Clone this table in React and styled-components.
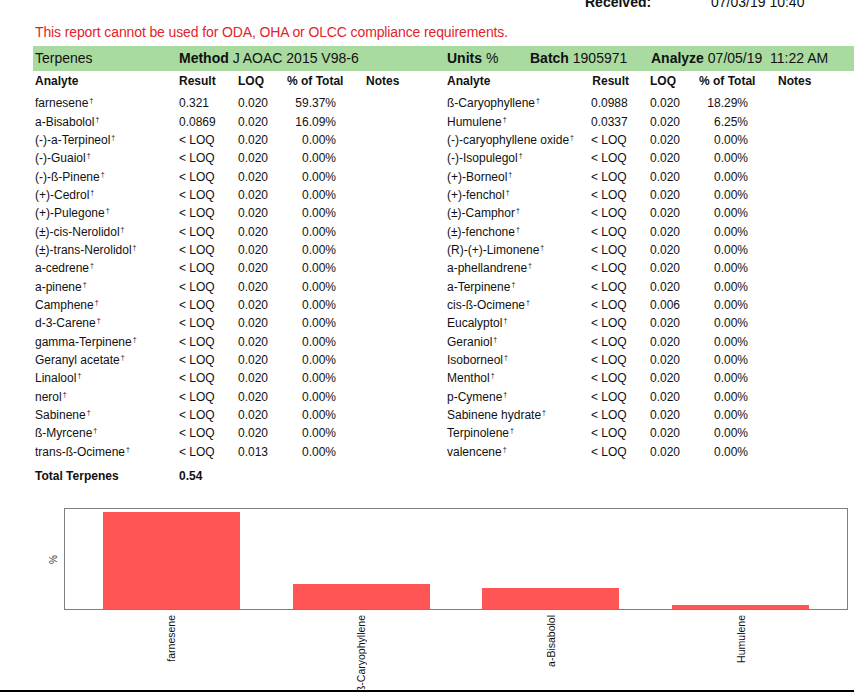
import React from 'react';
import styled, { createGlobalStyle } from 'styled-components';

const GlobalStyle = createGlobalStyle`
  html, body { margin: 0; padding: 0; overflow: hidden; background: #fff; }
  body { font-family: "Liberation Sans", Arial, Helvetica, sans-serif; color: #111; }
`;

const Page = styled.div`
  width: 854px;
  height: 692px;
  box-sizing: border-box;
  padding-left: 33px;
  overflow: hidden;
  display: flex;
  flex-direction: column;
`;

const ReceivedRow = styled.div`
  margin-top: -6px;
  height: 16px;
  line-height: 16px;
  font-size: 14px;
  display: flex;
  padding-left: 552px;
`;

const ReceivedLabel = styled.span`
  font-weight: bold;
  width: 126px;
`;

const Notice = styled.div`
  margin-top: 14px;
  padding-left: 2px;
  height: 16px;
  line-height: 16px;
  font-size: 14px;
  letter-spacing: -0.12px;
  color: #e3232b;
`;

const Band = styled.div`
  margin-top: 6px;
  height: 27px;
  background: #a9dba1;
  display: grid;
  grid-template-columns: 144px 268px 83px 121px 1fr;
  align-items: center;
  padding-left: 2px;
  font-size: 14px;
  white-space: pre;
`;

const Tables = styled.div`
  display: flex;
  padding-left: 2px;
  margin-top: ${(p) => p.$mt || 0}px;
`;

const Half = styled.div`
  flex: ${(p) => (p.$first ? '0 0 412px' : '1 1 auto')};
  display: flex;
  flex-direction: column;
`;

const Row = styled.div`
  display: grid;
  grid-template-columns: 144px 59px 49px 79px 1fr;
  height: 18.33px;
  align-items: center;
  font-size: 12px;
  font-weight: ${(p) => (p.$bold ? 'bold' : 'normal')};
  white-space: nowrap;
`;

const Body = styled.div`
  margin-top: 4px;
  display: flex;
  flex-direction: column;
`;

const Cell = styled.span`
  text-align: ${(p) => p.$align || 'left'};
  padding-right: ${(p) => p.$pr || 0}px;
`;

const Dagger = styled.sup`
  font-size: 7px;
  line-height: 0;
  vertical-align: 4px;
  margin-left: 1px;
`;

const TotalRow = styled(Row)`
  margin-top: 6px;
`;

const ChartRow = styled.div`
  margin-top: 23px;
  display: flex;
`;

const YAxis = styled.div`
  width: 31px;
  height: 102px;
  display: flex;
  align-items: center;
  justify-content: flex-end;
  padding-right: 5px;
  box-sizing: border-box;
`;

const YLabel = styled.span`
  writing-mode: vertical-rl;
  transform: rotate(180deg);
  font-size: 10px;
  color: #333;
`;

const PlotColumn = styled.div`
  width: 784px;
  display: flex;
  flex-direction: column;
`;

const PlotBox = styled.div`
  height: 102px;
  box-sizing: border-box;
  border: 1px solid #7f7f7f;
  display: flex;
  align-items: flex-end;
  justify-content: space-between;
  padding: 0 38px;
`;

const Bar = styled.div`
  width: 137px;
  background: #ff5555;
`;

const Labels = styled.div`
  height: 80px;
  box-sizing: border-box;
  padding: 5px 38px 0;
  display: flex;
  justify-content: space-between;
`;

const LabelCell = styled.div`
  width: 137px;
  display: flex;
  justify-content: center;
  align-items: flex-start;
`;

const LabelText = styled.span`
  writing-mode: vertical-rl;
  transform: rotate(180deg);
  font-size: 10.5px;
  line-height: 12px;
  color: #111;
  white-space: nowrap;
`;

const BottomRule = styled.div`
  position: relative;
  z-index: 1;
  margin-left: -33px;
  width: 854px;
  height: 2px;
  background: #000;
`;

const L = '< LOQ';
const left = [
  ['farnesene', '0.321', '0.020', '59.37%'],
  ['a-Bisabolol', '0.0869', '0.020', '16.09%'],
  ['(-)-a-Terpineol', L, '0.020', '0.00%'],
  ['(-)-Guaiol', L, '0.020', '0.00%'],
  ['(-)-ß-Pinene', L, '0.020', '0.00%'],
  ['(+)-Cedrol', L, '0.020', '0.00%'],
  ['(+)-Pulegone', L, '0.020', '0.00%'],
  ['(±)-cis-Nerolidol', L, '0.020', '0.00%'],
  ['(±)-trans-Nerolidol', L, '0.020', '0.00%'],
  ['a-cedrene', L, '0.020', '0.00%'],
  ['a-pinene', L, '0.020', '0.00%'],
  ['Camphene', L, '0.020', '0.00%'],
  ['d-3-Carene', L, '0.020', '0.00%'],
  ['gamma-Terpinene', L, '0.020', '0.00%'],
  ['Geranyl acetate', L, '0.020', '0.00%'],
  ['Linalool', L, '0.020', '0.00%'],
  ['nerol', L, '0.020', '0.00%'],
  ['Sabinene', L, '0.020', '0.00%'],
  ['ß-Myrcene', L, '0.020', '0.00%'],
  ['trans-ß-Ocimene', L, '0.013', '0.00%'],
];
const right = [
  ['ß-Caryophyllene', '0.0988', '0.020', '18.29%'],
  ['Humulene', '0.0337', '0.020', '6.25%'],
  ['(-)-caryophyllene oxide', L, '0.020', '0.00%'],
  ['(-)-Isopulegol', L, '0.020', '0.00%'],
  ['(+)-Borneol', L, '0.020', '0.00%'],
  ['(+)-fenchol', L, '0.020', '0.00%'],
  ['(±)-Camphor', L, '0.020', '0.00%'],
  ['(±)-fenchone', L, '0.020', '0.00%'],
  ['(R)-(+)-Limonene', L, '0.020', '0.00%'],
  ['a-phellandrene', L, '0.020', '0.00%'],
  ['a-Terpinene', L, '0.020', '0.00%'],
  ['cis-ß-Ocimene', L, '0.006', '0.00%'],
  ['Eucalyptol', L, '0.020', '0.00%'],
  ['Geraniol', L, '0.020', '0.00%'],
  ['Isoborneol', L, '0.020', '0.00%'],
  ['Menthol', L, '0.020', '0.00%'],
  ['p-Cymene', L, '0.020', '0.00%'],
  ['Sabinene hydrate', L, '0.020', '0.00%'],
  ['Terpinolene', L, '0.020', '0.00%'],
  ['valencene', L, '0.020', '0.00%'],
];

const chart = [
  { name: 'farnesene', pct: 59.37 },
  { name: 'ß-Caryophyllene', pct: 18.29 },
  { name: 'a-Bisabolol', pct: 16.09 },
  { name: 'Humulene', pct: 6.25 },
];

function TableHalf({ rows, first }) {
  return (
    <Half $first={first}>
      <Row $bold>
        <Cell>Analyte</Cell>
        <Cell $align={first ? 'left' : 'right'} $pr={first ? 0 : 21}>Result</Cell>
        <Cell>LOQ</Cell>
        <Cell>% of Total</Cell>
        <Cell>Notes</Cell>
      </Row>
      <Body>
        {rows.map(([n, r, q, p]) => (
          <Row key={n}>
            <Cell>
              {n}
              <Dagger>†</Dagger>
            </Cell>
            <Cell>{r}</Cell>
            <Cell>{q}</Cell>
            <Cell $align="right" $pr={30}>{p}</Cell>
            <Cell />
          </Row>
        ))}
      </Body>
    </Half>
  );
}

export default function App() {
  return (
    <>
      <GlobalStyle />
      <Page>
        <ReceivedRow>
          <ReceivedLabel>Received:</ReceivedLabel>
          <span>07/03/19 10:40</span>
        </ReceivedRow>
        <Notice>This report cannot be used for ODA, OHA or OLCC compliance requirements.</Notice>
        <Band>
          <span>Terpenes</span>
          <span><b>Method</b> J AOAC 2015 V98-6</span>
          <span><b>Units</b> %</span>
          <span><b>Batch</b> 1905971</span>
          <span><b>Analyze</b> 07/05/19  11:22 AM</span>
        </Band>
        <Tables $mt={1}>
          <TableHalf rows={left} first />
          <TableHalf rows={right} />
        </Tables>
        <Tables>
          <Half $first>
            <TotalRow $bold>
              <Cell>Total Terpenes</Cell>
              <Cell>0.54</Cell>
              <Cell />
              <Cell />
              <Cell />
            </TotalRow>
          </Half>
        </Tables>
        <ChartRow>
          <YAxis>
            <YLabel>%</YLabel>
          </YAxis>
          <PlotColumn>
            <PlotBox>
              {chart.map((c) => (
                <Bar key={c.name} style={{ height: `${Math.max(2, (c.pct - 3.95) * 1.75)}px` }} />
              ))}
            </PlotBox>
            <Labels>
              {chart.map((c) => (
                <LabelCell key={c.name}>
                  <LabelText>{c.name}</LabelText>
                </LabelCell>
              ))}
            </Labels>
          </PlotColumn>
        </ChartRow>
        <BottomRule />
      </Page>
    </>
  );
}
